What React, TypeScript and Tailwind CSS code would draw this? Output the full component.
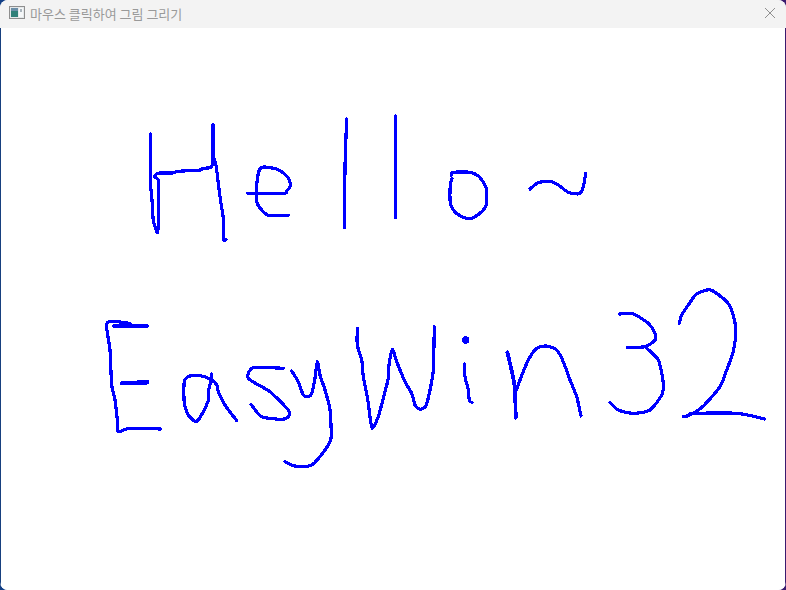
const strokes: { d: string; w?: number }[] = [
  { d: "150.3,134 150.3,180 152,200 153.3,220 157.3,232.7 158.3,221.7 158.3,181.7 155,177.7 156,174.3 160,173 172.3,173 178.3,171.3 200.7,170 202.7,168.3 210,167.7 212.3,163.3 212.3,125" },
  { d: "213.3,125 213.3,155 216,165 218.3,183.3 220.7,201.7 223.3,218.3 223.7,239.3 226,239.3" },
  { d: "247.7,193.3 284,193.3 286.7,191 290,186.7 289.3,180 285,174.3 276.7,169 263.3,167 259.3,170 256.7,185 256.7,201.7 261.7,210 269.3,215.7 288.3,215.3" },
  { d: "346.7,119 345.7,144.3 345,168.3 344.3,227.7" },
  { d: "395.3,116 395.3,217.7" },
  { d: "451,175 453.3,172.3 470,172.3 478.3,176 483.3,182.3 486.7,190 486.3,205 481.7,211.7 475,216.7 469,218.7 460,215.7 453.3,210 450.3,203.3 450.3,185 452,178.3" },
  { d: "530,189 538.3,182.7 550,181.3 558.3,185 568.3,192.3 579.3,193.7 583.3,186.7 585.7,173.3" },
  { d: "147.7,326 113.3,326" },
  { d: "130,323.3 107.3,322.7 110,350 111.7,385 115,400 117.7,423 118.3,431.7 130,428.3 161,429" },
  { d: "121.7,383.3 147.3,382.3", w: 4.4 },
  { d: "236.7,420.7 225,405 218.3,391.7 216.7,385 211.7,380 201.7,376 190,376 184.3,381.7 184.3,403.3 188.3,415 194.3,421 198.3,420 205,408.3 208.3,400 208.3,391.7 211.7,378.3 211.7,374" },
  { d: "283.3,368.3 255,367.3 249,371.7 248.3,378.3 258.3,385 270,391.7 288.3,410 288.3,416.7 281.7,419.3 261.7,416.7 251,404.3" },
  { d: "291.7,371 298.3,381.7 303.3,395 308.3,396.7 311.7,393.3 315,378.3 317.3,361.7 320,375 325,390 330,410 331,438.3 325,450 311.7,465 295,466 285,461.7" },
  { d: "357.3,328.3 357.3,345 361.7,360 363.3,376.7 367.3,396.7 370,416.7 371.7,427.3 373.3,427.3 378.3,416.7 383.3,398.3 388.3,378.3 389,365 392.3,349.3 396.7,361.7 405,381.7 411.7,393.3 415,405 420,409.3 426,406 430,390 433.3,370 434.3,326.7" },
  { d: "464.3,364 465,376.7 468.3,390 469.3,400.7 472,402.3" },
  { d: "507.3,352.3 512.3,373.3 515,390 515.7,417.7", w: 3.8 },
  { d: "515.7,391.7 520,380 528.3,360 536.7,348.3 546.7,346 556.7,350 563.3,361.7 570,380 576.7,396.7 581,416" },
  { d: "619,314 633.3,314 648.3,323.3 655,333.3 655,340 645,346.7 627.7,347.3" },
  { d: "645,346.7 658.3,360 663.3,383.3 661.7,395 650,410 633.3,413.3 618.3,410 610,402.3" },
  { d: "679.3,323.3 681.7,315 688.3,305 696.7,294 710.7,290 726.7,301.7 732.7,313.3 735.7,330 733.3,351.7 726.7,370 720,386.7 703.3,406 690,415 683.3,416.7" },
  { d: "690,413.3 736.7,413.3 765,419" },
];

function smooth(d: string) {
  const p = d.split(" ").map((s) => s.split(",").map(Number));
  let out = `M${p[0][0]} ${p[0][1]}`;
  for (let i = 0; i < p.length - 1; i++) {
    const a = p[Math.max(i - 1, 0)];
    const b = p[i];
    const c = p[i + 1];
    const e = p[Math.min(i + 2, p.length - 1)];
    const k = 0.12;
    out += ` C${b[0] + (c[0] - a[0]) * k} ${b[1] + (c[1] - a[1]) * k} ${c[0] - (e[0] - b[0]) * k} ${c[1] - (e[1] - b[1]) * k} ${c[0]} ${c[1]}`;
  }
  return out;
}

export default function App() {
  return (
    <div className="h-[590px] w-[786px] overflow-hidden bg-[linear-gradient(90deg,#123f86,#3a1a6e)]">
      <div className="flex h-full w-full flex-col overflow-hidden rounded-lg bg-white">
        <header className="flex h-[28px] shrink-0 items-center justify-between bg-[#f3f3f3] pb-[2px] pl-[9px] pr-[10px]">
          <div className="flex items-center gap-[5px]">
            <svg width="16" height="14" viewBox="0 0 16 14" aria-hidden="true">
              <rect x="0.5" y="0.5" width="15" height="12" fill="#e4e8ea" stroke="#8e8e8e" />
              <rect x="2" y="2" width="7" height="9" fill="#2f7f78" />
              <rect x="2" y="2" width="7" height="3" fill="#6b8fa8" />
              <rect x="10" y="2" width="4" height="9" fill="#f5f7f8" />
              <rect x="11" y="3" width="2" height="3" fill="#a9b4bc" />
            </svg>
            <span className="text-[13px] leading-none text-[#999999] [font-family:'Noto_Sans_CJK_KR','Noto_Sans',sans-serif]">
              마우스 클릭하여 그림 그리기
            </span>
          </div>
          <svg width="12" height="12" viewBox="0 0 12 12" aria-hidden="true">
            <path d="M1 1 L11 11 M11 1 L1 11" stroke="#8f8f8f" strokeWidth="1" fill="none" />
          </svg>
        </header>
        <main className="min-h-0 flex-1 border-x border-x-[#17407f] border-r-[#3a1a6e] bg-white">
          <svg width="784" height="562" viewBox="1 28 784 562" className="block" aria-hidden="true">
            {strokes.map((s, i) => (
              <path key={i} d={smooth(s.d)} fill="none" stroke="#0000ff" strokeWidth={s.w ?? 3.2} strokeLinejoin="round" strokeLinecap="round" shapeRendering="crispEdges" />
            ))}
            <circle cx="465.7" cy="340" r="3.8" fill="#0000ff" shapeRendering="crispEdges" />
          </svg>
        </main>
      </div>
    </div>
  );
}
